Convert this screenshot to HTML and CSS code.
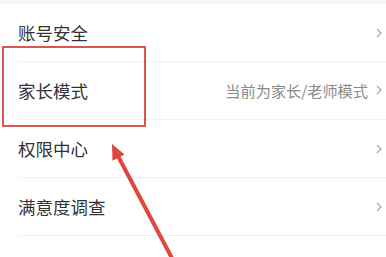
FILE: index.html
```html
<!DOCTYPE html>
<html lang="zh">
<head>
<meta charset="utf-8">
<link rel="stylesheet" href="styles.css">
</head>
<body>
<div class="page">
  <div class="topgap"></div>
  <ul class="list">
    <li class="row"><div class="inner"><span class="label">账号安全</span><span class="right"><svg class="chev" viewBox="0 0 6 10"><polyline points="1,1 5,5 1,9"/></svg></span></div></li>
    <li class="row"><div class="inner"><span class="label">家长模式</span><span class="right"><span class="value">当前为家长/老师模式</span><svg class="chev" viewBox="0 0 6 10"><polyline points="1,1 5,5 1,9"/></svg></span></div></li>
    <li class="row"><div class="inner"><span class="label">权限中心</span><span class="right"><svg class="chev" viewBox="0 0 6 10"><polyline points="1,1 5,5 1,9"/></svg></span></div></li>
    <li class="row"><div class="inner"><span class="label">满意度调查</span><span class="right"><svg class="chev" viewBox="0 0 6 10"><polyline points="1,1 5,5 1,9"/></svg></span></div></li>
    <li class="row"><div class="inner"><span class="label">版本更新</span><span class="right"><svg class="chev" viewBox="0 0 6 10"><polyline points="1,1 5,5 1,9"/></svg></span></div></li>
  </ul>
  <div class="highlight"></div>
  <svg class="arrow" viewBox="0 0 386 257" width="386" height="257">
    <line x1="174" y1="262" x2="118" y2="156" />
    <polygon points="112,144 124.5,154.5 112.5,160.8" />
  </svg>
</div>
</body>
</html>
```
FILE: styles.css
```css
html, body {
  margin: 0;
  padding: 0;
  background: #ffffff;
}
.page {
  position: relative;
  width: 386px;
  height: 257px;
  overflow: hidden;
  font-family: "Noto Sans CJK SC", "Noto Sans", sans-serif;
}
.topgap {
  height: 4px;
  background: #f6f6f6;
}
.list {
  list-style: none;
  margin: 0;
  padding: 0;
}
.row {
  height: 58px;
}
.inner {
  margin-left: 18px;
  height: 57px;
  border-bottom: 1px solid #f1f1f1;
  display: flex;
  align-items: center;
  justify-content: space-between;
  padding-right: 4px;
}
.label {
  font-size: 17.5px;
  color: #333333;
  line-height: 1;
}
.right {
  display: flex;
  align-items: center;
  gap: 8px;
}
.value {
  font-size: 15.2px;
  color: #8a8a8a;
  line-height: 1;
}
.chev {
  width: 6px;
  height: 10px;
  fill: none;
  stroke: #a8a8a8;
  stroke-width: 1.3;
}
.highlight {
  position: absolute;
  left: 2px;
  top: 46px;
  width: 140px;
  height: 77px;
  border: 2px solid #d9574f;
}
.arrow {
  position: absolute;
  left: 0;
  top: 0;
}
.arrow line {
  stroke: #e0463a;
  stroke-width: 4;
}
.arrow polygon {
  fill: #e0463a;
}
```
